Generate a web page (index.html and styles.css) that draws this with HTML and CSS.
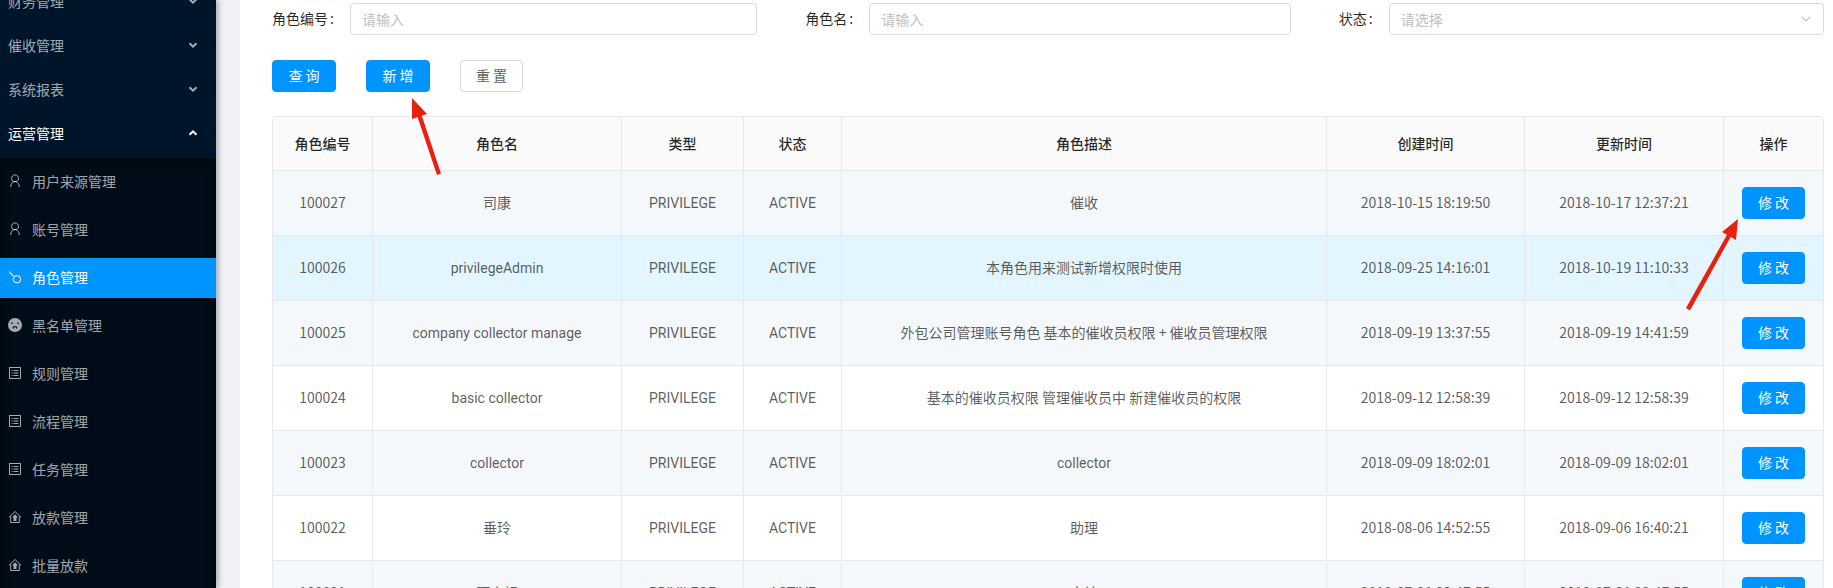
FILE: index.html
```html
<!DOCTYPE html>
<html lang="zh-CN">
<head>
<meta charset="utf-8">
<title>角色管理</title>
<link rel="stylesheet" href="styles.css">
</head>
<body>
<svg class="sprite" aria-hidden="true">
  <symbol id="down" viewBox="0 0 10 10"><path d="M1.5 3.2 5 6.6 8.500 3.2"/></symbol>
  <symbol id="up" viewBox="0 0 10 10"><path d="M1.500 6.800 5 3.400 8.500 6.800"/></symbol>
  <symbol id="user" viewBox="0 0 14 14"><path d="M4.900 7.200A3.500 3.500 0 1 1 9.100 7.200M2.700 13c.1-3 1.400-4.800 4.300-5.700 2.900.9 4.200 2.700 4.300 5.700M4.900 7.200 7 7.600l2.100-.4"/></symbol>
  <symbol id="key" viewBox="0 0 14 14"><circle cx="9" cy="9.300" r="3.700"/><path d="M6.300 6.700 1.200 1.600M1.500 3.600 3.200 3.400M3.300 5.200 5 5"/></symbol>
  <symbol id="frown" viewBox="0 0 14 14"><path class="solid" fill-rule="evenodd" d="M7 0a7 7 0 1 1 0 14A7 7 0 0 1 7 0ZM3.200 4.600v1.400h1.400V4.600ZM9.400 4.600v1.400h1.400V4.600ZM4.600 10.400h1.200C6 9.500 6.300 9.200 7 9.200s1 .3 1.200 1.200h1.200C9.300 8.800 8.400 8 7 8S4.700 8.800 4.600 10.400Z"/></symbol>
  <symbol id="list" viewBox="0 0 14 14"><path d="M1.500 1.500h11v11h-11ZM5.500 4.500h5M5.500 7h5M5.500 9.500h5M3.500 4.500h1M3.500 7h1M3.500 9.500h1"/></symbol>
  <symbol id="house" viewBox="0 0 14 14"><path d="M1 7.300 7 1.500l6 5.800M2.700 6.500v6h8.600v-6"/><path class="solid" d="M7 4.300 10 7.500H8.500V11h-3V7.500H4Z"/></symbol>
</svg>
<div class="layout">
  <aside class="sider">
    <nav class="menu">
      <a class="group" href="#">财务管理<svg class="caret"><use href="#down"/></svg></a>
      <a class="group" href="#">催收管理<svg class="caret"><use href="#down"/></svg></a>
      <a class="group" href="#">系统报表<svg class="caret"><use href="#down"/></svg></a>
      <a class="group open" href="#">运营管理<svg class="caret"><use href="#up"/></svg></a>
      <div class="submenu">
        <a class="item" href="#"><svg class="icon"><use href="#user"/></svg>用户来源管理</a>
        <a class="item" href="#"><svg class="icon"><use href="#user"/></svg>账号管理</a>
        <a class="item active" href="#"><svg class="icon"><use href="#key"/></svg>角色管理</a>
        <a class="item" href="#"><svg class="icon"><use href="#frown"/></svg>黑名单管理</a>
        <a class="item" href="#"><svg class="icon"><use href="#list"/></svg>规则管理</a>
        <a class="item" href="#"><svg class="icon"><use href="#list"/></svg>流程管理</a>
        <a class="item" href="#"><svg class="icon"><use href="#list"/></svg>任务管理</a>
        <a class="item" href="#"><svg class="icon"><use href="#house"/></svg>放款管理</a>
        <a class="item" href="#"><svg class="icon"><use href="#house"/></svg>批量放款</a>
      </div>
    </nav>
  </aside>
  <main class="content">
    <form class="filters">
      <div class="field"><label for="role-id">角色编号</label><input class="control" id="role-id" type="text" placeholder="请输入"></div>
      <div class="field"><label for="role-name">角色名</label><input class="control" id="role-name" type="text" placeholder="请输入"></div>
      <div class="field"><label for="status">状态</label>
        <div class="select"><select class="control" id="status"><option>请选择</option></select><svg class="arrow-down"><use href="#down"/></svg></div>
      </div>
    </form>
    <div class="actions">
      <button class="btn primary" type="button">查 询</button>
      <div class="marked">
        <button class="btn primary" type="button">新 增</button>
        <svg class="pointer pointer-add" viewBox="0 0 30 78"><path d="M0 0 15 16 9.800 17.800 29 75.500 25 77 5.600 19.300 0 21Z"/></svg>
      </div>
      <button class="btn" type="button">重 置</button>
    </div>
    <table class="roles">
      <colgroup><col class="c-id"><col class="c-name"><col class="c-type"><col class="c-status"><col><col class="c-created"><col class="c-updated"><col class="c-op"></colgroup>
      <thead><tr><th>角色编号</th><th>角色名</th><th>类型</th><th>状态</th><th>角色描述</th><th>创建时间</th><th>更新时间</th><th>操作</th></tr></thead>
      <tbody>
        <tr><td>100027</td><td>司康</td><td class="latin">PRIVILEGE</td><td class="latin">ACTIVE</td><td>催收</td><td>2018-10-15 18:19:50</td><td>2018-10-17 12:37:21</td><td><div class="marked"><button class="btn primary" type="button">修 改</button><svg class="pointer pointer-edit" viewBox="0 0 54 92"><path d="M52 0 50 21 44.700 18 4 91.500 0 89 41 15.800 36 13Z"/></svg></div></td></tr>
        <tr class="hover"><td>100026</td><td class="latin">privilegeAdmin</td><td class="latin">PRIVILEGE</td><td class="latin">ACTIVE</td><td>本角色用来测试新增权限时使用</td><td>2018-09-25 14:16:01</td><td>2018-10-19 11:10:33</td><td><button class="btn primary" type="button">修 改</button></td></tr>
        <tr><td>100025</td><td class="latin">company collector manage</td><td class="latin">PRIVILEGE</td><td class="latin">ACTIVE</td><td>外包公司管理账号角色 基本的催收员权限 + 催收员管理权限</td><td>2018-09-19 13:37:55</td><td>2018-09-19 14:41:59</td><td><button class="btn primary" type="button">修 改</button></td></tr>
        <tr><td>100024</td><td class="latin">basic collector</td><td class="latin">PRIVILEGE</td><td class="latin">ACTIVE</td><td>基本的催收员权限 管理催收员中 新建催收员的权限</td><td>2018-09-12 12:58:39</td><td>2018-09-12 12:58:39</td><td><button class="btn primary" type="button">修 改</button></td></tr>
        <tr><td>100023</td><td class="latin">collector</td><td class="latin">PRIVILEGE</td><td class="latin">ACTIVE</td><td class="latin">collector</td><td>2018-09-09 18:02:01</td><td>2018-09-09 18:02:01</td><td><button class="btn primary" type="button">修 改</button></td></tr>
        <tr><td>100022</td><td>垂玲</td><td class="latin">PRIVILEGE</td><td class="latin">ACTIVE</td><td>助理</td><td>2018-08-06 14:52:55</td><td>2018-09-06 16:40:21</td><td><button class="btn primary" type="button">修 改</button></td></tr>
        <tr><td>100021</td><td>阿小规</td><td class="latin">PRIVILEGE</td><td class="latin">ACTIVE</td><td>审计</td><td>2018-07-31 23:47:55</td><td>2018-07-31 23:47:55</td><td><button class="btn primary" type="button">修 改</button></td></tr>
      </tbody>
    </table>
  </main>
</div>
</body>
</html>
```
FILE: styles.css
```css
* { box-sizing: border-box; }

body {
  margin: 0;
  height: 100vh;
  overflow: hidden;
  background: #f0f2f5;
  color: rgba(0, 0, 0, .65);
  font: 14px/20px "Noto Sans CJK SC", sans-serif;
}

.sprite { display: none; }
svg { fill: none; stroke: currentColor; stroke-width: 1; flex: none; }
.solid { fill: currentColor; stroke: none; }
a { color: inherit; text-decoration: none; }

.layout { display: flex; height: 100%; overflow: hidden; }

.sider {
  position: relative;
  flex: 0 0 216px;
  overflow: clip;
  overflow-clip-margin: 12px;
  background: #001529;
  color: rgba(255, 255, 255, .65);
  box-shadow: 2px 0 6px rgba(0, 21, 41, .35);
}
.menu { margin-top: -18px; }
.group {
  display: flex;
  align-items: center;
  justify-content: space-between;
  height: 40px;
  margin-bottom: 4px;
  padding: 0 18px 2px 8px;
}
.open { color: #fff; }
.caret { width: 10px; height: 10px; stroke-width: 2; }
.submenu {
  padding: 4px 0;
  background: #000c17;
  box-shadow: inset 0 2px 8px rgba(0, 0, 0, .45);
}
.item {
  display: flex;
  align-items: center;
  gap: 10px;
  height: 40px;
  margin-bottom: 8px;
  padding: 0 8px 2px;
}
.active { background: #0094ff; color: #fff; }
.icon { width: 14px; height: 14px; }

.content {
  flex: 1;
  min-width: 0;
  margin-left: 24px;
  padding: 3px 9px 0 32px;
  background: #fff;
}

.filters { display: grid; grid-template-columns: repeat(3, 1fr); gap: 48px; }
.field { display: flex; align-items: center; color: rgba(0, 0, 0, .85); }
.field label { display: flex; flex: none; padding-bottom: 2px; }
.field label::after { content: ":"; width: 20px; padding-left: 2px; }
.control {
  flex: 1;
  width: 100%;
  min-width: 0;
  height: 32px;
  padding: 0 11px;
  border: 1px solid #d9d9d9;
  border-radius: 4px;
  background: #fff;
  color: #bfbfbf;
  font: inherit;
  appearance: none;
}
.control::placeholder { color: #bfbfbf; }
.select { position: relative; display: flex; flex: 1; }
.arrow-down {
  position: absolute;
  top: 10px;
  right: 12px;
  width: 12px;
  height: 12px;
  color: #bfbfbf;
}

.actions { display: flex; gap: 30px; margin: 25px 0 24px; }
.btn {
  display: block;
  min-width: 63px;
  height: 32px;
  padding: 0 0 2px;
  border: 1px solid #d9d9d9;
  border-radius: 4px;
  background: #fff;
  color: rgba(0, 0, 0, .65);
  font: inherit;
}
.primary { border-color: #0094ff; background: #0094ff; color: #fff; }
.actions .primary { min-width: 64px; }

.marked { position: relative; }
.pointer { position: absolute; z-index: 1; fill: #e8210f; stroke: none; pointer-events: none; }
.pointer-add { top: 38px; left: 46px; width: 30px; height: 78px; }
.pointer-edit { top: 32px; right: 65px; width: 54px; height: 92px; }

.roles {
  width: 100%;
  table-layout: fixed;
  border-collapse: separate;
  border-spacing: 0;
  border: 1px solid #e8e8e8;
  border-width: 1px 0 0 1px;
  border-radius: 4px 4px 0 0;
}
.c-id, .c-op { width: 100px; }
.c-name { width: 249px; }
.c-type { width: 122px; }
.c-status { width: 98px; }
.c-created { width: 198px; }
.c-updated { width: 199px; }
.roles th, .roles td {
  padding: 16px 16px 18px;
  border: 1px solid #e8e8e8;
  border-width: 0 1px 1px 0;
  text-align: center;
}
.roles th {
  height: 54px;
  padding: 16px 16px 17px;
  background: #fafafa;
  color: rgba(0, 0, 0, .85);
  font-weight: 500;
}
.roles th:last-child { border-top-right-radius: 4px; }
.roles td:last-child { padding: 16px 18px; }
.roles td .btn { width: 100%; }
.roles tbody tr:nth-child(odd) { background: #f5f8fa; }
.roles tbody .hover { background: #e3f6ff; }
.roles .latin { padding: 16px; font-family: Roboto, sans-serif; }
```
